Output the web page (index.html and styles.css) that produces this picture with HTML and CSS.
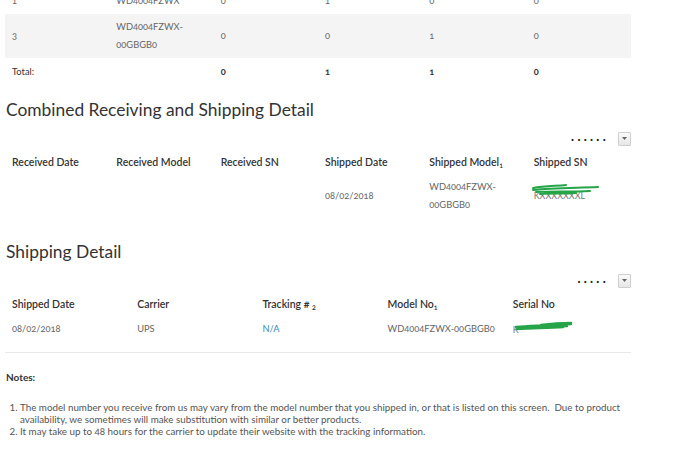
FILE: index.html
```html
<!DOCTYPE html>
<html>
<head>
<meta charset="utf-8">
<link rel="stylesheet" href="styles.css">
</head>
<body>
<div class="page">
  <table class="grid summary">
    <colgroup><col><col><col><col><col><col></colgroup>
    <tr class="row"><td>1</td><td>WD4004FZWX</td><td>0</td><td>1</td><td>0</td><td>0</td></tr>
    <tr class="row shade"><td>3</td><td>WD4004FZWX-<br>00GBGB0</td><td>0</td><td>0</td><td>1</td><td>0</td></tr>
    <tr class="row total"><td>Total:</td><td></td><td class="num">0</td><td class="num">1</td><td class="num">1</td><td class="num">0</td></tr>
  </table>

  <section class="block combined">
    <h2 class="title">Combined Receiving and Shipping Detail</h2>
    <div class="toolbar"><span class="dots">&middot;&middot;&middot;&middot;&middot;&middot;</span><span class="dd"><svg width="5" height="3" viewBox="0 0 5 3"><path d="M0 0h5L2.5 3z" fill="#666"/></svg></span></div>
    <table class="grid detail">
      <colgroup><col><col><col><col><col><col></colgroup>
      <tr class="head"><th>Received Date</th><th>Received Model</th><th>Received SN</th><th>Shipped Date</th><th>Shipped Model<sub>1</sub></th><th>Shipped SN</th></tr>
      <tr class="data"><td></td><td></td><td></td><td>08/02/2018</td><td>WD4004FZWX-<br>00GBGB0</td><td><span class="redact r1"><span class="hidden-sn">KXXXXXXXL</span><svg width="72" height="14" viewBox="0 0 72 14"><path d="M3 5 C14 3 26 3 36 2 M3 7 C22 5 44 5 68 4 M6 9 C22 8 40 9 60 8 M10 11 C22 10 34 11 46 10" stroke="#25a548" stroke-width="2" fill="none" stroke-linecap="round"/></svg></span></td></tr>
    </table>
  </section>

  <section class="block shipping">
    <h2 class="title">Shipping Detail</h2>
    <div class="toolbar"><span class="dots">&middot;&middot;&middot;&middot;&middot;</span><span class="dd"><svg width="5" height="3" viewBox="0 0 5 3"><path d="M0 0h5L2.5 3z" fill="#666"/></svg></span></div>
    <table class="grid ship">
      <colgroup><col><col><col><col><col></colgroup>
      <tr class="head"><th>Shipped Date</th><th>Carrier</th><th>Tracking # <sub>2</sub></th><th>Model No<sub>1</sub></th><th>Serial No</th></tr>
      <tr class="data"><td>08/02/2018</td><td>UPS</td><td><span class="link">N/A</span></td><td class="nowrap">WD4004FZWX-00GBGB0</td><td><span class="redact r2"><span class="hidden-sn">K</span><svg width="64" height="12" viewBox="0 0 64 12"><path d="M5 6 C20 5 40 4 60 3 M6 8 C22 7 36 7 52 6 M30 4 C38 3 46 2 60 2 M12 7 C26 6 40 6 56 5" stroke="#25a548" stroke-width="2.4" fill="none" stroke-linecap="round"/></svg></span></td></tr>
    </table>
  </section>

  <section class="notes">
    <h3 class="notes-title">Notes:</h3>
    <ol class="notes-list">
      <li>The model number you receive from us may vary from the model number that you shipped in, or that is listed on this screen.&nbsp; Due to product availability, we sometimes will make substitution with similar or better products.</li>
      <li>It may take up to 48 hours for the carrier to update their website with the tracking information.</li>
    </ol>
  </section>
</div>
</body>
</html>
```
FILE: styles.css
```css
html, body {
  margin: 0;
  padding: 0;
  background: #fff;
}
body {
  font-family: Lato, "Open Sans", sans-serif;
  font-variant-numeric: oldstyle-nums;
  color: #555;
  overflow: hidden;
}
.page {
  width: 626px;
  padding: 0 5px;
  margin-top: -12px;
}
.grid {
  width: 626px;
  border-collapse: collapse;
  table-layout: fixed;
  font-size: 9.3px;
}
.grid td, .grid th {
  text-align: left;
  vertical-align: middle;
  padding: 0 7px;
  line-height: 18px;
}
.summary .row td {
  padding-top: 4px;
  padding-bottom: 4px;
  color: #666;
}
.summary .shade td {
  background: #f4f4f4;
}
.summary .total td {
  color: #333;
  padding-top: 5px;
  padding-bottom: 5px;
}
.summary .total .num {
  font-weight: 700;
}
.block {
  display: flex;
  flex-direction: column;
}
.title {
  margin: 0;
  font-size: 17.4px;
  line-height: 22px;
  font-weight: 400;
  color: #333;
  padding-left: 1px;
}
.combined { margin-top: 13px; }
.shipping { margin-top: 23px; }
.toolbar {
  display: flex;
  justify-content: flex-end;
  align-items: center;
  gap: 9px;
  margin-top: 11px;
  height: 13px;
}
.dots {
  font-size: 11px;
  letter-spacing: 3.3px;
  color: #222;
  font-weight: 700;
  line-height: 13px;
}
.dd {
  width: 11px;
  height: 12px;
  border: 1px solid #cfcfcf;
  border-radius: 1px;
  background: linear-gradient(#fafafa, #e6e6e6);
  display: flex;
  align-items: center;
  justify-content: center;
}
.grid th {
  font-weight: 600;
  color: #333;
  padding-top: 8px;
  padding-bottom: 7px;
  font-size: 10.5px;
}
.grid sub {
  font-size: 7px;
  vertical-align: -2px;
  line-height: 0;
}
.detail .data td {
  color: #666;
  padding-bottom: 4px;
}
.ship .data td {
  color: #666;
  padding-top: 0;
  padding-bottom: 13px;
  border-bottom: 1px solid #e8e8e8;
}
.nowrap { white-space: nowrap; }
.link { color: #3a88b5; }
.redact {
  position: relative;
  display: inline-block;
  vertical-align: middle;
}
.redact .hidden-sn {
  color: #777;
  font-size: 9px;
}
.redact svg {
  position: absolute;
  left: -4px;
  top: -4px;
}
.r2 svg { left: -2px; top: 0; }
.notes {
  margin-top: 18px;
}
.notes-title {
  margin: 0;
  font-size: 10px;
  line-height: 12px;
  font-weight: 700;
  color: #333;
  padding-left: 1px;
}
.notes-list {
  margin: 18px 0 0;
  padding-left: 15px;
  font-size: 9.8px;
  line-height: 12px;
  color: #555;
}
```
